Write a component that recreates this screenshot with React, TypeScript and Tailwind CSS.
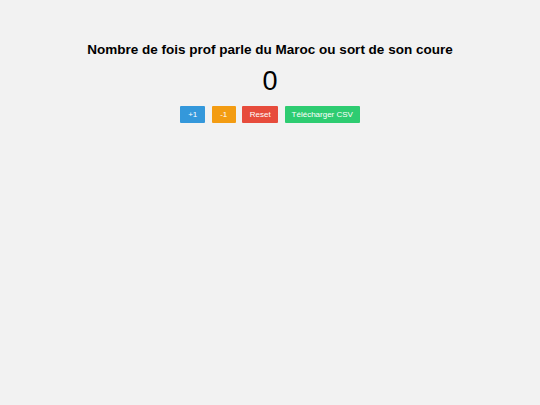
import { useState } from 'react';

export default function App() {
    const [count, setCount] = useState(0);

    const downloadCsv = () => {
        const blob = new Blob([`compteur\n${count}\n`], { type: 'text/csv' });
        const url = URL.createObjectURL(blob);
        const a = document.createElement('a');
        a.href = url;
        a.download = 'compteur.csv';
        a.click();
        URL.revokeObjectURL(url);
    };

    const btn = 'h-[17px] px-0 text-[8px] leading-none text-white rounded-[1px] whitespace-nowrap flex items-center justify-center';

    return (
        <div className="min-h-[405px] w-full bg-[#f2f2f2] font-['Liberation_Sans',Arial,sans-serif] text-black">
            <div className="flex flex-col items-center pt-[42px]">
                <h1 className="text-[13.5px] font-bold leading-[16px]">
                    Nombre de fois prof parle du Maroc ou sort de son coure
                </h1>
                <div className="mt-[8px] text-[27px] leading-[30px]">{count}</div>
                <div className="mt-[10px] flex gap-[6.5px]">
                    <button className={`${btn} w-[25px] bg-[#3498db]`} onClick={() => setCount(count + 1)}>
                        +1
                    </button>
                    <button className={`${btn} w-[24px] bg-[#f39c12]`} onClick={() => setCount(count - 1)}>
                        -1
                    </button>
                    <button className={`${btn} w-[36px] bg-[#e74c3c]`} onClick={() => setCount(0)}>
                        Reset
                    </button>
                    <button className={`${btn} w-[75px] bg-[#2ecc71]`} onClick={downloadCsv}>
                        Télécharger CSV
                    </button>
                </div>
            </div>
        </div>
    );
}
